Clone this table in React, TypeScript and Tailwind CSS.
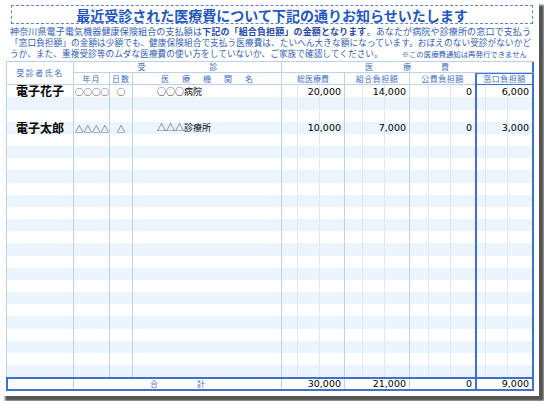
const COLS = "grid-cols-[67px_36px_23px_149px_63px_65px_65px_59px]";
const TOTAL_COLS = "grid-cols-[66px_36px_23px_149px_63px_65px_65px_57px]";

type Entry = {
  row: number;
  name: string;
  ym: string;
  days: string;
  inst: string;
  amounts: string[];
};

const entries: Entry[] = [
  { row: 0, name: "電子花子", ym: "○○○○", days: "○", inst: "○○○病院", amounts: ["20,000", "14,000", "0", "6,000"] },
  { row: 3, name: "電子太郎", ym: "△△△△", days: "△", inst: "△△△診療所", amounts: ["10,000", "7,000", "0", "3,000"] },
];

const totals = ["30,000", "21,000", "0", "9,000"];

function Amount({ value, className = "" }: { value?: string; className?: string }) {
  return (
    <div className={`grid grid-cols-[1fr_22px_24px] ${className}`}>
      <div className="col-start-1 row-start-1 border-r border-[#dceaf8]" />
      <div className="col-start-2 row-start-1 border-r border-[#dceaf8]" />
      <div className="col-span-3 col-start-1 row-start-1 flex items-center justify-end pr-[3px] font-['DejaVu_Sans',sans-serif] text-[9.5px] leading-none text-black">
        {value}
      </div>
    </div>
  );
}

function BodyRow({ index }: { index: number }) {
  const e = entries.find((x) => x.row === index);
  return (
    <div className={`grid flex-1 ${COLS} ${index % 2 ? "bg-[#ecf5fd]" : ""}`}>
      <div className="flex items-center border-r border-[#b9d2ef] pl-[9px] text-[12px] font-bold leading-none text-black">
        {e?.name}
      </div>
      <div className="flex items-center border-r border-[#b9d2ef] pl-[1px] text-[8.5px] leading-none text-black">
        {e?.ym}
      </div>
      <div className="flex items-center justify-center border-r border-[#b9d2ef] text-[8.5px] leading-none text-black">
        {e?.days}
      </div>
      <div className="flex items-center border-r border-[#b9d2ef] pl-[24px] text-[9px] leading-none text-black">
        {e?.inst}
      </div>
      <Amount value={e?.amounts[0]} className="border-r border-[#b9d2ef]" />
      <Amount value={e?.amounts[1]} className="border-r border-[#b9d2ef]" />
      <Amount value={e?.amounts[2]} />
      <Amount value={e?.amounts[3]} className="border-x-2 border-[#3c6fd8]" />
    </div>
  );
}

export default function App() {
  return (
    <div className="h-[401px] w-[544px] bg-white font-['Noto_Sans_CJK_JP',sans-serif]">
      <div className="flex h-[396px] w-[539px] flex-col bg-white shadow-[5px_5px_2px_#555]">
        <div className="ml-[11px] mt-[5px] flex h-[19px] w-[522px] items-center justify-center border border-dashed border-[#5b86d2]">
          <h1 className="text-[14px] font-bold leading-none text-[#2456c2]">
            最近受診された医療費について下記の通りお知らせいたします
          </h1>
        </div>

        <div className="ml-[10px] mt-[3px] w-[521px] leading-[10.4px] text-[#2f5db8]">
          <p className="whitespace-nowrap text-justify text-[9px] [text-align-last:justify]">
            神奈川県電子電気機器健康保険組合の支払額は
            <strong className="font-bold text-[#1f4aa8]">下記の「組合負担額」の金額となります</strong>
            。あなたが病院や診療所の窓口で支払う
          </p>
          <p className="whitespace-nowrap text-justify text-[8.6px] [text-align-last:justify]">
            「窓口負担額」の金額は少額でも、健康保険組合で支払う医療費は、たいへん大きな額になっています。おぼえのない受診がないかど
          </p>
          <div className="flex items-end justify-between whitespace-nowrap">
            <span className="text-[8.6px] tracking-[0.1px]">
              うか、また、重複受診等のムダな医療費の使い方をしていないか、ご家族で確認してください。
            </span>
            <span className="pr-[4px] text-[7.4px] leading-[9px]">※この医療費通知は再発行できません</span>
          </div>
        </div>

        <div className="ml-[6px] mt-[3px] w-[528px] text-[#3f6fc2]">
          <div className={`grid ${COLS} grid-rows-[11px_12px] border-l border-t border-[#b9d2ef] text-[8px] leading-none`}>
            <div className="row-span-2 flex items-center justify-center border-b border-r border-[#b9d2ef] tracking-[1.5px]">
              受診者氏名
            </div>
            <div className="col-span-3 flex items-center justify-center gap-[64px] border-b border-r border-[#b9d2ef]">
              <span>受</span>
              <span>診</span>
            </div>
            <div className="col-span-4 flex items-center justify-center gap-[30px] border-b border-[#b9d2ef] border-r-2 border-r-[#3c6fd8]">
              <span>医</span>
              <span>療</span>
              <span>費</span>
            </div>
            <div className="flex items-center justify-center border-b border-r border-[#b9d2ef] tracking-[1px]">年月</div>
            <div className="flex items-center justify-center border-b border-r border-[#b9d2ef] tracking-[1px]">日数</div>
            <div className="flex items-center justify-center gap-[13px] border-b border-r border-[#b9d2ef]">
              <span>医</span>
              <span>療</span>
              <span>機</span>
              <span>関</span>
              <span>名</span>
            </div>
            <div className="flex items-center justify-center border-b border-r border-[#b9d2ef]">総医療費</div>
            <div className="flex items-center justify-center border-b border-r border-[#b9d2ef] tracking-[0.5px]">組合負担額</div>
            <div className="flex items-center justify-center border-b border-[#b9d2ef] tracking-[0.5px]">公費負担額</div>
            <div className="flex items-center justify-center border-x-2 border-b border-t border-[#3c6fd8] tracking-[0.5px]">
              窓口負担額
            </div>
          </div>

          <div className="flex h-[292px] flex-col border-l border-[#b9d2ef]">
            {Array.from({ length: 24 }, (_, i) => (
              <BodyRow key={i} index={i} />
            ))}
          </div>

          <div className={`grid h-[14px] ${TOTAL_COLS} border-2 border-[#3c6fd8] text-[8px] leading-none`}>
            <div className="border-r border-[#b9d2ef]" />
            <div className="col-span-3 flex items-center justify-center gap-[39px] border-r border-[#b9d2ef]">
              <span>合</span>
              <span>計</span>
            </div>
            {totals.map((t, i) => (
              <div
                key={i}
                className={`flex items-center justify-end pr-[3px] font-['DejaVu_Sans',sans-serif] text-[9.5px] text-black ${
                  i < 2 ? "border-r border-[#b9d2ef]" : i === 3 ? "border-l-2 border-[#3c6fd8]" : ""
                }`}
              >
                {t}
              </div>
            ))}
          </div>
        </div>
      </div>
    </div>
  );
}
